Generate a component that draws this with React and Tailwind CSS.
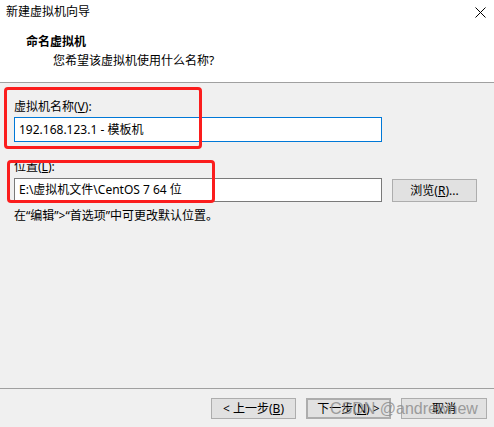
import React from "react";

const font = { fontFamily: '"Noto Sans", "Noto Sans CJK SC", sans-serif' };

function Btn({ children, className = "" }) {
  return (
    <div
      className={
        "h-[21px] w-[85px] flex items-center justify-center bg-[#e1e1e1] border border-[#adadad] text-[12px] leading-[16px] text-black " +
        className
      }
    >
      {children}
    </div>
  );
}

export default function App() {
  return (
    <div
      className="relative w-[494px] h-[427px] bg-[#f0f0f0] flex flex-col text-black overflow-hidden"
      style={font}
    >
      {/* header */}
      <div className="h-[83px] bg-white border-b border-[#a0a0a0] flex flex-col">
        <div className="h-[24px] flex items-center justify-between pl-[6px] pr-[8px]">
          <span className="text-[12px] leading-[16px]">新建虚拟机向导</span>
          <svg width="11" height="11" viewBox="0 0 11 11">
            <path d="M0.5 0.5 L10.5 10.5 M10.5 0.5 L0.5 10.5" stroke="#000" strokeWidth="1" />
          </svg>
        </div>
        <div className="mt-[10px] pl-[26px] text-[12px] leading-[16px] font-bold">命名虚拟机</div>
        <div className="mt-[3px] pl-[53px] text-[12px] leading-[16px]">您希望该虚拟机使用什么名称?</div>
      </div>

      {/* body */}
      <div className="flex flex-col pl-[14px]">
        <div className="mt-[16px] text-[12px] leading-[16px]">
          虚拟机名称(<u>V</u>):
        </div>
        <div className="mt-[2px] h-[25px] w-[368px] bg-white border border-[#0078d7] flex items-center pl-[4px] text-[12px]">
          192.168.123.1 - 模板机
        </div>
        <div className="mt-[17px] text-[12px] leading-[16px]">
          位置(<u>L</u>):
        </div>
        <div className="mt-[3px] flex items-start">
          <div className="h-[24px] w-[368px] bg-white border border-[#7a7a7a] flex items-center pl-[4px] text-[12px]">
            E:\虚拟机文件\CentOS 7 64 位
          </div>
          <Btn className="ml-[10px] mt-[1px] h-[23px]">
            浏览(<u>R</u>)...
          </Btn>
        </div>
        <div className="mt-[6px] text-[12px] leading-[16px]">在“编辑”&gt;“首选项”中可更改默认位置。</div>
      </div>

      <div className="flex-1" />

      {/* footer */}
      <div className="border-t border-[#a0a0a0] pt-[9px] pb-[8px] pr-[7px] flex justify-end gap-[10px]">
        <Btn>
          &lt; 上一步(<u>B</u>)
        </Btn>
        <Btn className="border-2 border-[#0078d7]">
          下一步(<u>N</u>) &gt;
        </Btn>
        <Btn className="w-[86px]">取消</Btn>
      </div>

      {/* annotations */}
      <div className="absolute left-[4px] top-[87px] w-[198px] h-[62px] border-[3px] border-[#fb1d1d] rounded-[4px] pointer-events-none" />
      <div className="absolute left-[7px] top-[160px] w-[208px] h-[43px] border-[3px] border-[#fb1d1d] rounded-[4px] pointer-events-none" />

      {/* watermark */}
      <div
        className="absolute left-[330px] top-[399px] text-[16px] leading-[20px] text-[#8a8a8a] opacity-80 pointer-events-none whitespace-nowrap"
        style={{ fontFamily: '"Liberation Sans", Arial, sans-serif' }}
      >
        CSDN @andrewnew
      </div>
    </div>
  );
}
